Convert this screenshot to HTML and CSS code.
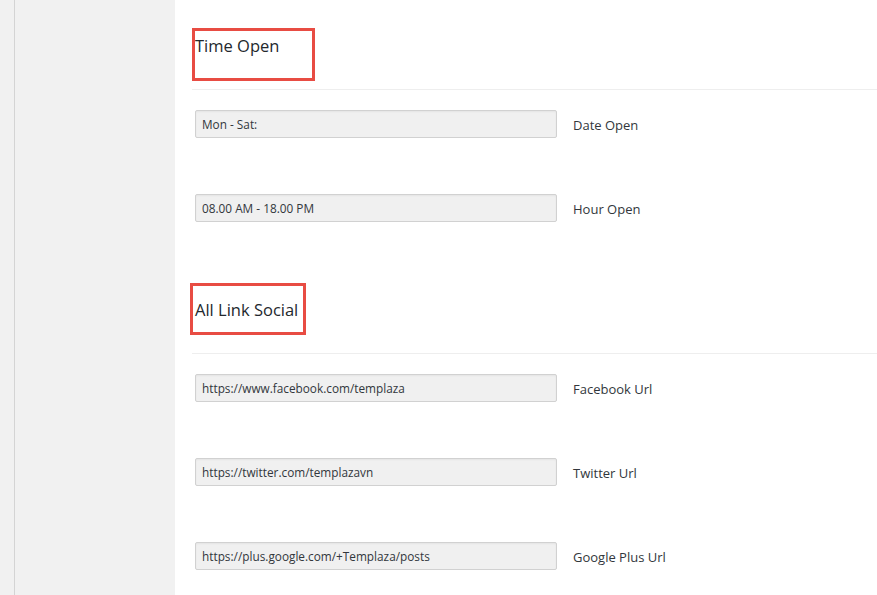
FILE: index.html
```html
<!DOCTYPE html>
<html lang="en">
<head>
<meta charset="utf-8">
<title>Theme Options</title>
<link rel="stylesheet" href="styles.css">
</head>
<body>
<div class="layout">
  <aside class="sidebar">
    <div class="sidebar-edge"></div>
    <div class="sidebar-panel"></div>
  </aside>
  <main class="content">
    <section class="section section-first">
      <h3 class="section-title">Time Open<span class="mark mark-time"></span></h3>
      <div class="rule"></div>
      <div class="field-row">
        <input class="field" type="text" value="Mon - Sat:" readonly>
        <label class="field-label">Date Open</label>
      </div>
      <div class="field-row">
        <input class="field" type="text" value="08.00 AM - 18.00 PM" readonly>
        <label class="field-label">Hour Open</label>
      </div>
    </section>
    <section class="section section-next">
      <h3 class="section-title">All Link Social<span class="mark mark-social"></span></h3>
      <div class="rule"></div>
      <div class="field-row">
        <input class="field" type="text" value="https://www.facebook.com/templaza" readonly>
        <label class="field-label">Facebook Url</label>
      </div>
      <div class="field-row">
        <input class="field" type="text" value="https://twitter.com/templazavn" readonly>
        <label class="field-label">Twitter Url</label>
      </div>
      <div class="field-row">
        <input class="field" type="text" value="https://plus.google.com/+Templaza/posts" readonly>
        <label class="field-label">Google Plus Url</label>
      </div>
    </section>
  </main>
</div>
</body>
</html>
```
FILE: styles.css
```css
html, body {
  margin: 0;
  padding: 0;
  background: #ffffff;
  overflow: hidden;
}

body {
  font-family: "Open Sans", "Noto Sans", "Liberation Sans", sans-serif;
  color: #23282d;
}

.layout {
  display: flex;
  min-height: 595px;
}

.sidebar {
  display: flex;
  width: 175px;
  flex: 0 0 175px;
  background: #f1f1f1;
}

.sidebar-edge {
  width: 14px;
  border-right: 1px solid #d4d4d4;
}

.sidebar-panel {
  flex: 1;
}

.content {
  flex: 1;
  padding-left: 17px;
}

.section-title {
  position: relative;
  margin: 0;
  padding: 0 0 31px 3px;
  font-size: 16.5px;
  font-weight: 400;
  line-height: 24px;
  color: #23282d;
}

.section-first .section-title {
  padding-top: 34px;
}

.section-next .section-title {
  padding-top: 40px;
}

.mark {
  position: absolute;
  border: 3px solid #e84c43;
  box-sizing: border-box;
}

.mark-time {
  left: 0;
  top: 28px;
  width: 123px;
  height: 53px;
}

.mark-social {
  left: -2px;
  top: 25px;
  width: 116px;
  height: 52px;
}

.rule {
  height: 1px;
  background: #eeeeee;
}

.field-row {
  display: flex;
  align-items: center;
  padding: 20px 0 36px 3px;
}

.field {
  box-sizing: border-box;
  width: 362px;
  height: 28px;
  margin: 0;
  padding: 0 6px;
  border: 1px solid #d1d1d1;
  border-radius: 2px;
  background: #f0f0f0;
  box-shadow: inset 0 1px 2px rgba(0, 0, 0, 0.05);
  font-family: "Open Sans", "Noto Sans", "Liberation Sans", sans-serif;
  font-size: 11.8px;
  color: #32373c;
  outline: none;
}

.field-label {
  margin-left: 16px;
  font-size: 13px;
  color: #32373c;
  line-height: 18px;
  padding-top: 2px;
}
```
